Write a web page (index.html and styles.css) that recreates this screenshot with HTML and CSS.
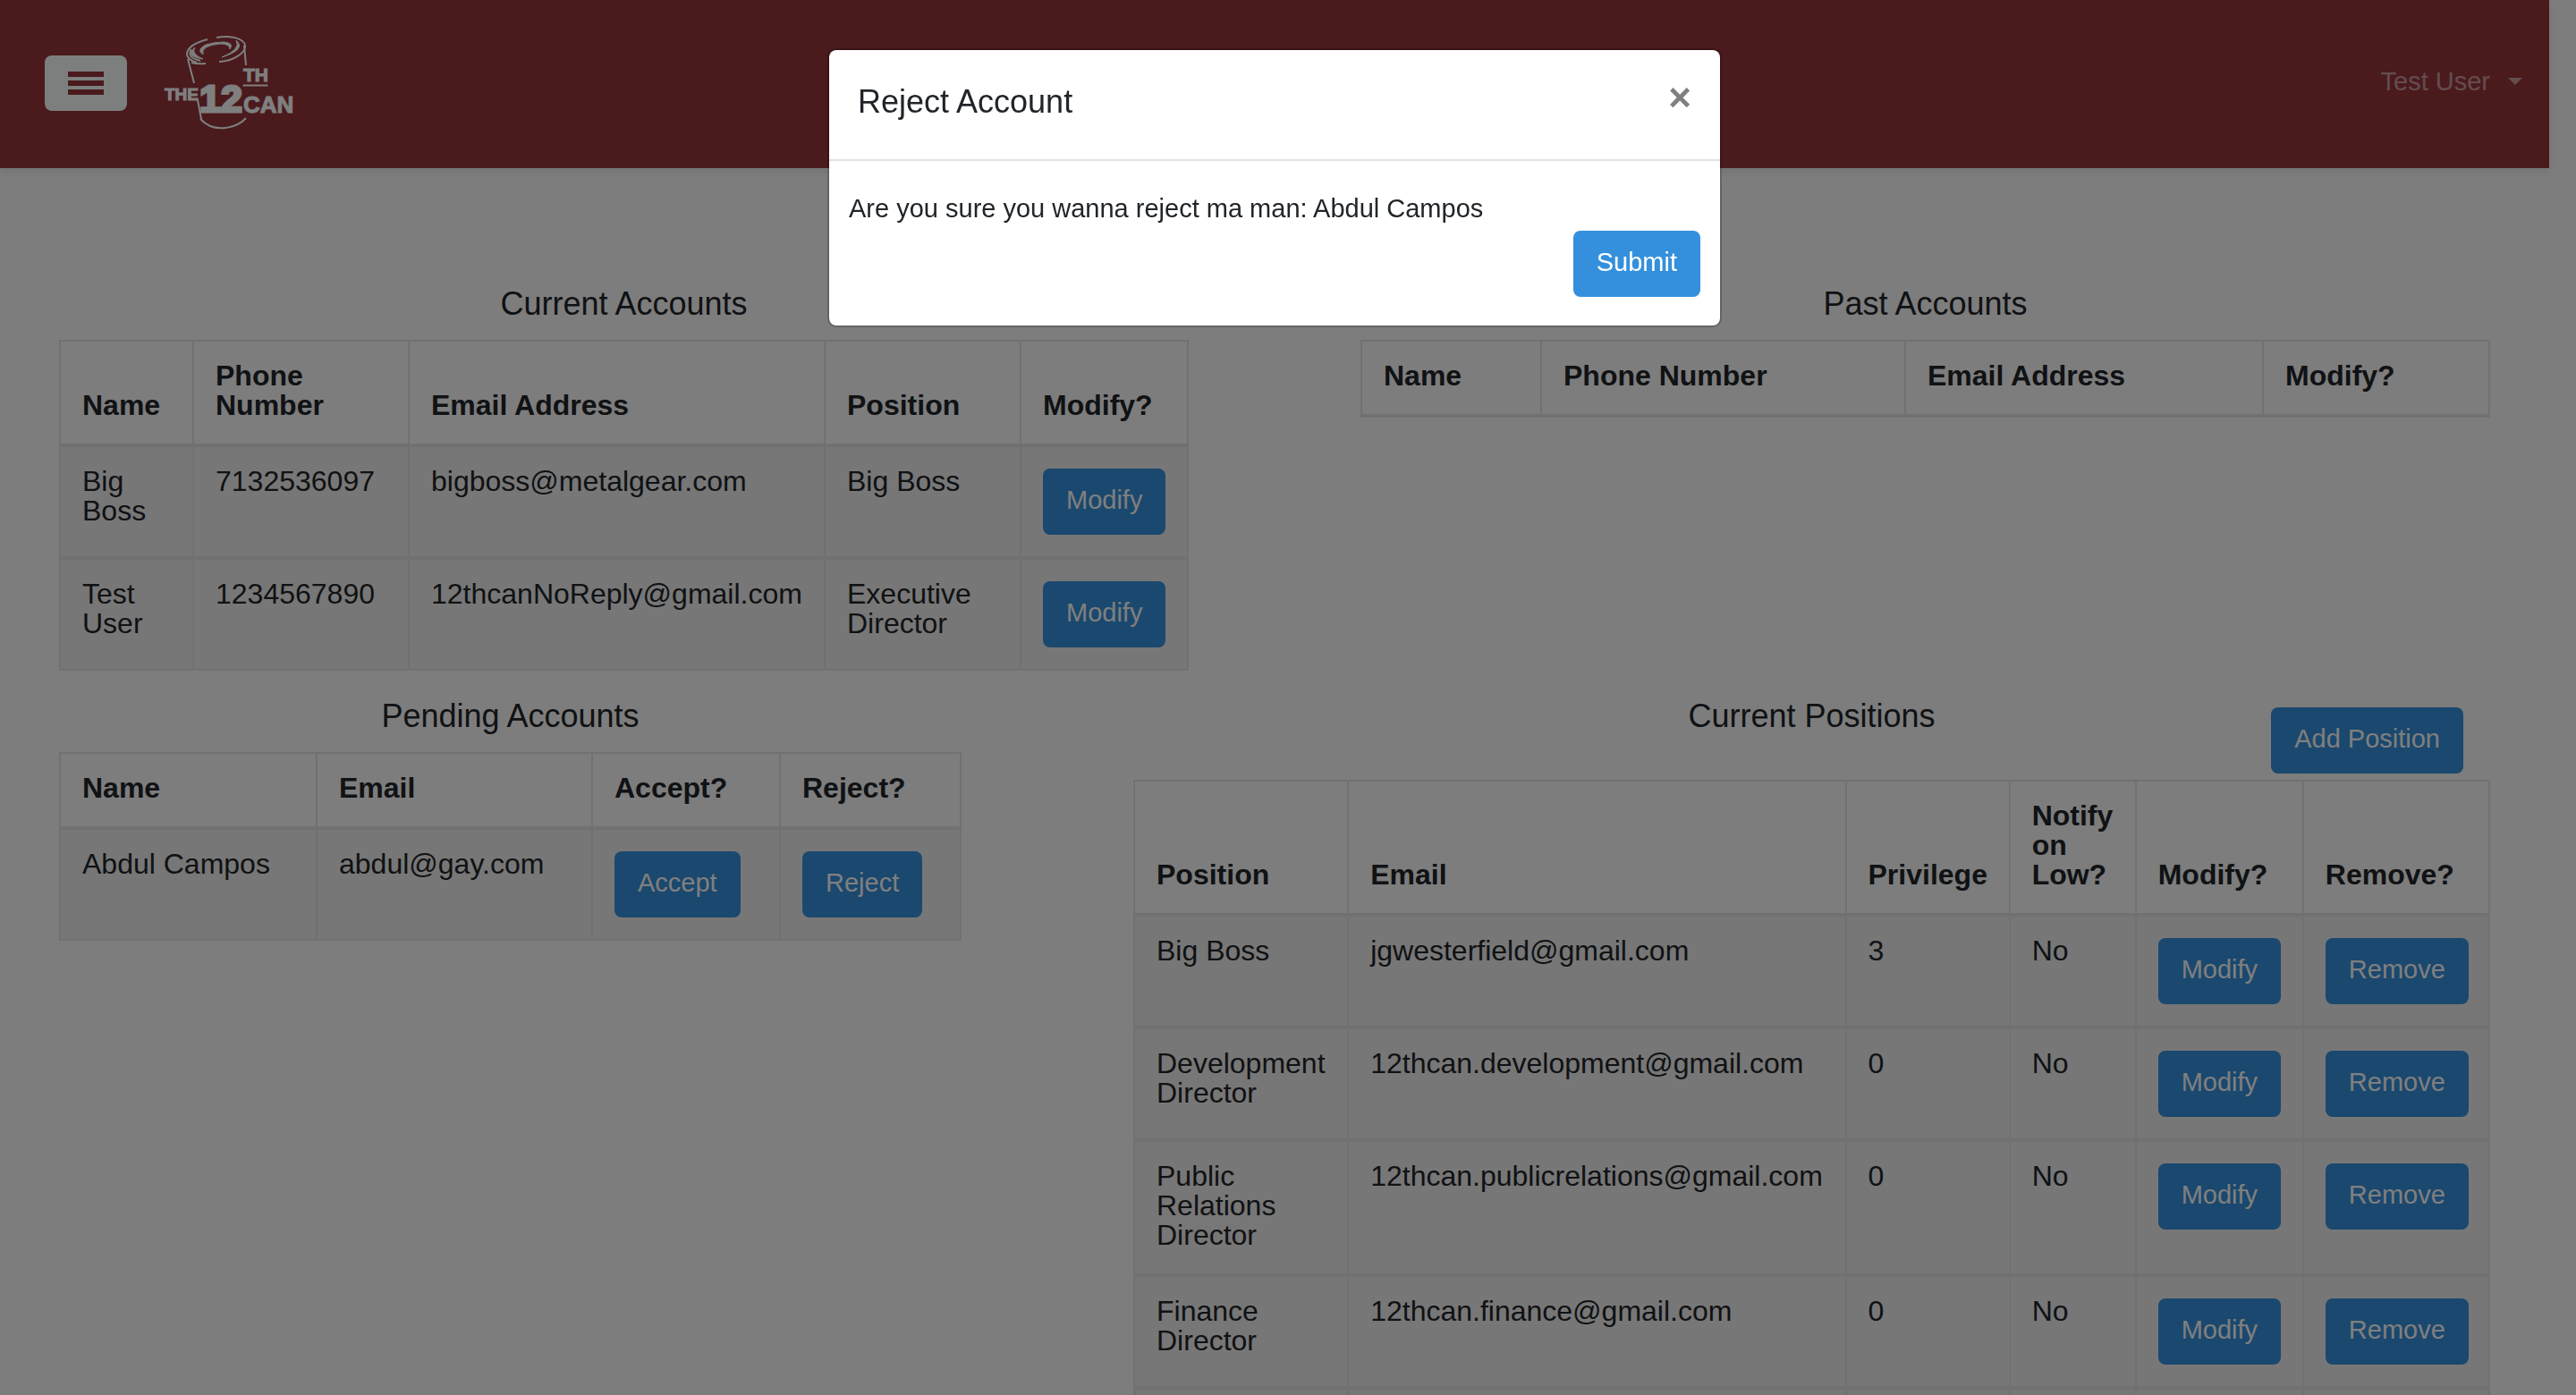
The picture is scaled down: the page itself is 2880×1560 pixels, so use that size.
FILE: index.html
```html
<!DOCTYPE html>
<html lang="en">
<head>
<meta charset="utf-8">
<title>The 12th Can - Accounts</title>
<link rel="stylesheet" href="styles.css">
</head>
<body>
<nav class="navbar">
  <button class="menu-toggle" type="button" aria-label="Toggle menu"><span></span><span></span><span></span></button>
  <a class="brand" href="#" aria-label="The 12th Can">
    <svg class="logo" viewBox="170 30 172 128">
      <g class="logo-can">
        <path d="M232 45Q209 51 209 62Q210 68 220 71"/>
        <path d="M242 43C258 40 273 44 274 52C275 61 258 70 245 70" stroke-width="2"/>
        <path d="M218 54Q206 64 227 67Q213 61 218 54Z" fill="#fff" stroke-width="1"/>
        <path d="M214 56Q208 65 224 69"/>
        <path d="M264 46Q276 56 248 65Q270 56 264 46Z" fill="#fff" stroke-width="1"/>
        <path d="M227 62Q219 57 230 51Q240 48 250 48Q262 49 257 56Q257 50 246 50Q224 52 227 62Z" fill="#fff" stroke-width="1"/>
        <path d="M210 67L217 94M214 71Q221 73 230 72M221 113L225 134M273 52L275 74"/>
        <path d="M224 134Q235 146 252 144Q267 142 275 133"/>
      </g>
      <g class="logo-text">
        <text x="184" y="113" font-size="19">THE</text>
        <text class="logo-number" x="223" y="126" font-size="43">12</text>
        <text x="272" y="92" font-size="21">TH</text>
        <text x="272" y="127" font-size="26">CAN</text>
        <rect x="272" y="96" width="27" height="1"/>
      </g>
    </svg>
  </a>
  <button class="user-menu" type="button">Test User<span class="caret"></span></button>
</nav>

<main class="content">
  <div class="row row-even">
    <section>
      <h2>Current Accounts</h2>
      <table>
        <colgroup><col style="width:149px"><col style="width:241px"><col style="width:465px"><col style="width:219px"><col style="width:187px"></colgroup>
        <thead><tr><th>Name</th><th>Phone Number</th><th>Email Address</th><th>Position</th><th>Modify?</th></tr></thead>
        <tbody>
          <tr><td>Big Boss</td><td>7132536097</td><td>bigboss@metalgear.com</td><td>Big Boss</td><td class="action"><button class="btn" type="button">Modify</button></td></tr>
          <tr><td>Test User</td><td>1234567890</td><td>12thcanNoReply@gmail.com</td><td>Executive Director</td><td class="action"><button class="btn" type="button">Modify</button></td></tr>
        </tbody>
      </table>
    </section>
    <section>
      <h2>Past Accounts</h2>
      <table>
        <colgroup><col style="width:201px"><col style="width:407px"><col style="width:400px"><col style="width:253px"></colgroup>
        <thead><tr><th>Name</th><th>Phone Number</th><th>Email Address</th><th>Modify?</th></tr></thead>
      </table>
    </section>
  </div>
  <div class="row row-split">
    <section>
      <h2>Pending Accounts</h2>
      <table>
        <colgroup><col style="width:287px"><col style="width:308px"><col style="width:210px"><col style="width:202px"></colgroup>
        <thead><tr><th>Name</th><th>Email</th><th>Accept?</th><th>Reject?</th></tr></thead>
        <tbody>
          <tr><td>Abdul Campos</td><td>abdul@gay.com</td><td class="action"><button class="btn" type="button">Accept</button></td><td class="action"><button class="btn" type="button">Reject</button></td></tr>
        </tbody>
      </table>
    </section>
    <section>
      <div class="section-head">
        <h2>Current Positions</h2>
        <button class="btn" type="button">Add Position</button>
      </div>
      <table>
        <colgroup><col style="width:239px"><col style="width:556px"><col style="width:183px"><col style="width:141px"><col style="width:187px"><col style="width:208px"></colgroup>
        <thead><tr><th>Position</th><th>Email</th><th>Privilege</th><th>Notify on Low?</th><th>Modify?</th><th>Remove?</th></tr></thead>
        <tbody>
          <tr><td>Big Boss</td><td>jgwesterfield@gmail.com</td><td>3</td><td>No</td><td class="action"><button class="btn" type="button">Modify</button></td><td class="action"><button class="btn" type="button">Remove</button></td></tr>
          <tr><td>Development Director</td><td>12thcan.development@gmail.com</td><td>0</td><td>No</td><td class="action"><button class="btn" type="button">Modify</button></td><td class="action"><button class="btn" type="button">Remove</button></td></tr>
          <tr><td>Public Relations Director</td><td>12thcan.publicrelations@gmail.com</td><td>0</td><td>No</td><td class="action"><button class="btn" type="button">Modify</button></td><td class="action"><button class="btn" type="button">Remove</button></td></tr>
          <tr><td>Finance Director</td><td>12thcan.finance@gmail.com</td><td>0</td><td>No</td><td class="action"><button class="btn" type="button">Modify</button></td><td class="action"><button class="btn" type="button">Remove</button></td></tr>
          <tr><td></td><td></td><td></td><td></td><td></td><td></td></tr>
        </tbody>
      </table>
    </section>
  </div>
</main>

<div class="backdrop">
  <div class="modal" role="dialog" aria-modal="true" aria-labelledby="modal-title">
    <div class="modal-header">
      <h2 id="modal-title">Reject Account</h2>
      <button class="close" type="button" aria-label="Close">×</button>
    </div>
    <form class="modal-body">
      <p>Are you sure you wanna reject ma man: Abdul Campos</p>
      <button class="btn" type="submit">Submit</button>
    </form>
  </div>
</div>
</body>
</html>
```
FILE: styles.css
```css
* { box-sizing: border-box; }

body {
  height: 100vh;
  margin: 0;
  padding-right: 30px;
  overflow: hidden;
  background: #fafafa;
  color: #212529;
  font: 32px/33px "Liberation Sans", Arial, sans-serif;
}

button { border: 0; font: inherit; cursor: pointer; }

h2 {
  margin: 0 0 20px;
  font-size: 36px;
  font-weight: 400;
  line-height: 40px;
  text-align: center;
}

.navbar {
  display: flex;
  align-items: center;
  height: 188px;
  padding: 0 30px 2px 50px;
  background: #94343a;
  box-shadow: 0 4px 8px rgba(0, 0, 0, .08);
}

.menu-toggle {
  display: flex;
  flex-direction: column;
  align-items: center;
  justify-content: center;
  gap: 4px;
  width: 92px;
  height: 62px;
  padding: 0;
  border-radius: 8px;
  background: #f8fffb;
}
.menu-toggle span { width: 40px; height: 6px; background: #94343a; }

.brand { display: flex; margin-left: 28px; }
.logo { width: 172px; height: 128px; }
.logo-can { fill: none; stroke: #fff; stroke-width: 2; }
.logo-text {
  fill: #fff;
  stroke: #fff;
  stroke-width: 1;
  font-family: "Liberation Sans", Arial, sans-serif;
  font-weight: 700;
}
.logo-number { stroke-width: 3; }

.user-menu {
  display: flex;
  align-items: center;
  gap: 20px;
  margin: 0 0 4px auto;
  padding: 0;
  background: none;
  color: rgba(255, 255, 255, .5);
  font-size: 29px;
  line-height: 34px;
}
.caret {
  border: 8px solid transparent;
  border-top-color: currentColor;
  border-bottom: 0;
}

.content {
  display: grid;
  gap: 31px;
  padding: 132px 66px 30px;
}
.row { display: grid; gap: 192px; align-items: start; }
.row-even { grid-template-columns: 1fr 1fr; }
.row-split { grid-template-columns: 1009fr 1517fr; }

.section-head {
  display: grid;
  grid-template-columns: 1fr auto 1fr;
  align-items: start;
  margin-bottom: 7px;
}
.section-head h2 { grid-column: 2; margin: 0; }
.section-head .btn { justify-self: end; margin: 10px 30px 0 0; }

table {
  width: 100%;
  border: 2px solid #dee2e6;
  border-collapse: collapse;
  table-layout: fixed;
}
th, td {
  padding: 22px 24px 26px;
  border: 2px solid #dee2e6;
  text-align: left;
  vertical-align: top;
}
th { border-bottom-width: 4px; vertical-align: bottom; }
td { border-top-width: 4px; background: #eeeeee; }
.action { padding: 24px 23px 24px 24px; }

.btn {
  display: block;
  padding: 18px 26px 22px;
  border-radius: 8px;
  background: #3490dc;
  color: #fff;
  font-size: 29px;
  line-height: 34px;
}

.backdrop {
  position: fixed;
  inset: 0;
  display: flex;
  align-items: flex-start;
  justify-content: center;
  padding: 54px 30px 0 0;
  background: rgba(0, 0, 0, .5);
}
.modal {
  width: 1000px;
  border: 2px solid rgba(0, 0, 0, .2);
  border-radius: 10px;
  background: #fff;
  background-clip: padding-box;
}
.modal-header {
  display: flex;
  align-items: flex-start;
  justify-content: space-between;
  padding: 38px 32px 44px;
  border-bottom: 2px solid #dee2e6;
}
.modal-header h2 { margin: 0; }
.close {
  height: 40px;
  padding: 0 0 10px;
  background: none;
  color: #7f7f7f;
  font-size: 44px;
  font-weight: 700;
  line-height: 30px;
}
.modal-body {
  display: grid;
  gap: 8px;
  padding: 36px 22px 32px;
}
.modal-body p { margin: 0; font-size: 29px; line-height: 34px; }
.modal-body .btn { justify-self: end; }
```
